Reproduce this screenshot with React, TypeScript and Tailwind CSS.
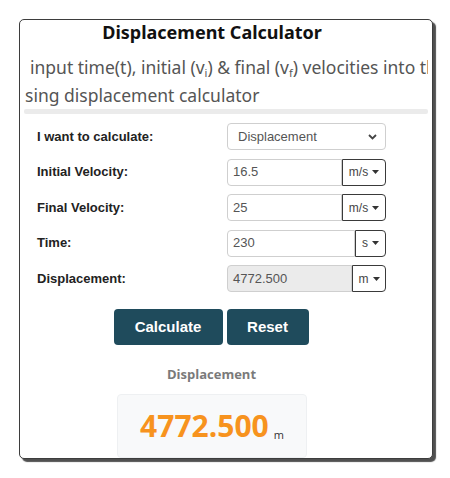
import React from "react";

const sans = { fontFamily: '"Liberation Sans", Arial, sans-serif' };
const noto = { fontFamily: '"Noto Sans", "Open Sans", sans-serif' };
const open = { fontFamily: '"Open Sans", "Noto Sans", sans-serif' };

function Caret() {
  return (
    <svg width="7" height="4" viewBox="0 0 7 4" className="ml-[4px]">
      <path d="M0 0 H7 L3.5 4 Z" fill="#333" />
    </svg>
  );
}

function Row({ label, children }: { label: string; children: React.ReactNode }) {
  return (
    <div className="flex items-center h-[27px]">
      <div className="w-[190px] text-[13px] font-bold text-[#222]" style={sans}>
        {label}
      </div>
      <div className="flex-1 flex h-full">{children}</div>
    </div>
  );
}

function UnitInput({
  value,
  unit,
  unitW,
  disabled,
}: {
  value: string;
  unit: string;
  unitW: string;
  disabled?: boolean;
}) {
  return (
    <>
      <div
        className={`flex-1 flex items-center pl-[5px] border border-[#cfcfcf] rounded-l-[4px] text-[13px] text-[#555] ${
          disabled ? "bg-[#ebebeb]" : "bg-white"
        }`}
        style={sans}
      >
        {value}
      </div>
      <div
        className={`${unitW} flex items-center justify-center border border-[#3a3a3a] rounded-r-[4px] text-[12px] text-[#444] bg-white`}
        style={sans}
      >
        {unit}
        <Caret />
      </div>
    </>
  );
}

export default function App() {
  return (
    <div className="w-[450px] h-[478px] bg-white pt-[19px] pl-[19px]">
      <div className="w-[414px] h-[440px] bg-white border border-[#3d3d3d] rounded-[5px] shadow-[3px_3px_1px_#505050] overflow-hidden flex flex-col">
        <div
          className="h-[24px] leading-[24px] text-center text-[18px] font-bold text-[#111] pr-[28px]"
          style={noto}
        >
          Displacement Calculator
        </div>
        <div className="mt-[9px] mx-[4px] overflow-hidden">
          <div
            className="text-[17.5px] leading-[28px] text-[#555] whitespace-nowrap pl-[6px]"
            style={noto}
          >
            {" "}input time(t), initial (v<sub className="text-[11px]">i</sub>) &amp; final (v
            <sub className="text-[11px]">f</sub>) velocities into the
          </div>
          <div
            className="text-[17.5px] leading-[28px] text-[#555] whitespace-nowrap pl-[1px]"
            style={noto}
          >
            sing displacement calculator
          </div>
          <div className="h-[5px] bg-[#ebebeb] rounded-[2px]" />
        </div>
        <div className="mt-[9px] pl-[17px] pr-[46px] flex flex-col gap-[8.5px]">
          <Row label="I want to calculate:">
            <div
              className="flex-1 flex items-center justify-between pl-[10px] pr-[8px] border border-[#cfcfcf] rounded-[4px] text-[13px] text-[#555]"
              style={sans}
            >
              <span>Displacement</span>
              <svg width="9" height="6" viewBox="0 0 9 6">
                <path d="M1 1 L4.5 4.5 L8 1" stroke="#444" strokeWidth="1.8" fill="none" />
              </svg>
            </div>
          </Row>
          <Row label="Initial Velocity:">
            <UnitInput value="16.5" unit="m/s" unitW="w-[44px]" />
          </Row>
          <Row label="Final Velocity:">
            <UnitInput value="25" unit="m/s" unitW="w-[44px]" />
          </Row>
          <Row label="Time:">
            <UnitInput value="230" unit="s" unitW="w-[31px]" />
          </Row>
          <Row label="Displacement:">
            <UnitInput value="4772.500" unit="m" unitW="w-[34px]" disabled />
          </Row>
        </div>
        <div className="mt-[17px] flex justify-center gap-[4px] pr-[30px]">
          <div
            className="w-[109px] h-[36px] rounded-[4px] bg-[#1f4b5c] text-white text-[15px] font-bold flex items-center justify-center"
            style={sans}
          >
            Calculate
          </div>
          <div
            className="w-[82px] h-[36px] rounded-[4px] bg-[#1f4b5c] text-white text-[15px] font-bold flex items-center justify-center"
            style={sans}
          >
            Reset
          </div>
        </div>
        <div
          className="mt-[20px] text-center text-[13px] font-bold text-[#7a7a7a] pr-[29px] leading-[18px]"
          style={open}
        >
          Displacement
        </div>
        <div className="mt-[11px] ml-[97px] w-[190px] flex-1 bg-[#f8f9fa] border border-[#eef0f2] rounded-[4px] flex items-end justify-center pb-[16px]">
          <span className="text-[30px] font-bold text-[#f7931e] leading-none" style={open}>
            4772.500
          </span>
          <span className="text-[11px] text-[#333] ml-[5px] leading-none mb-[1px]" style={open}>
            m
          </span>
        </div>
      </div>
    </div>
  );
}
